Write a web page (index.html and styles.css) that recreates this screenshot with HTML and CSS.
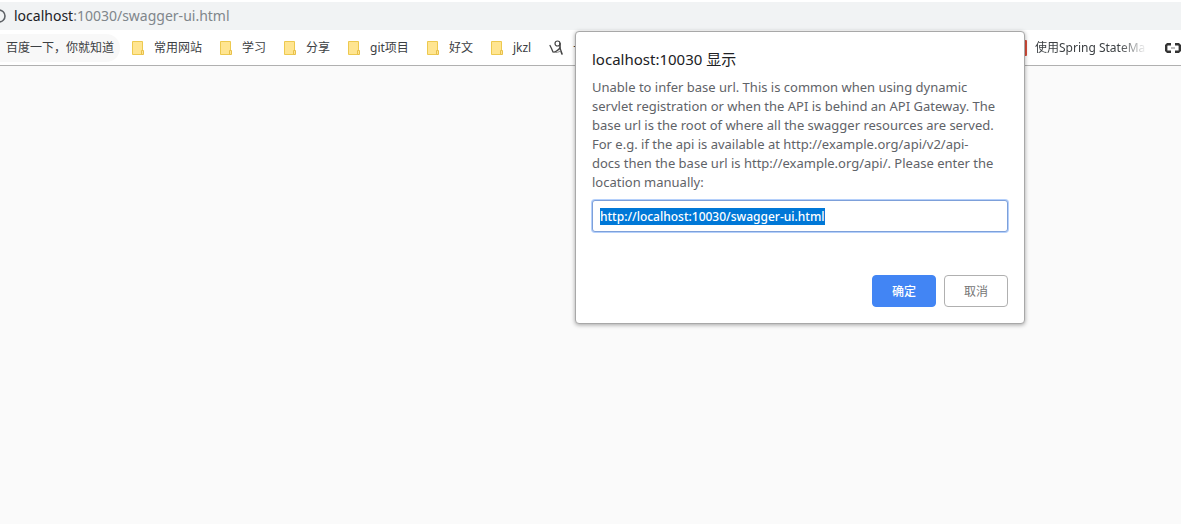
FILE: index.html
```html
<!DOCTYPE html>
<html lang="zh-CN">
<head>
<meta charset="utf-8">
<title>localhost:10030/swagger-ui.html</title>
<link rel="stylesheet" href="styles.css">
</head>
<body>
<svg class="defs" aria-hidden="true">
  <symbol id="folder" viewBox="0 0 12 14">
    <path d="M.5.5h10v13H.5z" fill="#ffe591" stroke="#edc94f"/>
    <path d="M9.500 9.500h2v4h-2z" fill="#ffe591" stroke="#e8c04a"/>
  </symbol>
</svg>
<header class="browser">
  <div class="address">
    <svg class="info" viewBox="0 0 14 14" aria-hidden="true"><circle cx="7" cy="7" r="6" fill="none" stroke="#5f6368" stroke-width="1.600"/></svg>
    <span class="url"><span class="host">localhost</span>:10030/swagger-ui.html</span>
  </div>
  <nav class="bookmarks" aria-label="书签">
    <a class="bookmark bookmark-active" href="#">百度一下，你就知道</a>
    <a class="bookmark" href="#"><svg class="folder"><use href="#folder"/></svg>常用网站</a>
    <a class="bookmark" href="#"><svg class="folder"><use href="#folder"/></svg>学习</a>
    <a class="bookmark" href="#"><svg class="folder"><use href="#folder"/></svg>分享</a>
    <a class="bookmark" href="#"><svg class="folder"><use href="#folder"/></svg>git项目</a>
    <a class="bookmark" href="#"><svg class="folder"><use href="#folder"/></svg>好文</a>
    <a class="bookmark" href="#"><svg class="folder"><use href="#folder"/></svg>jkzl</a>
    <a class="bookmark" href="#"><svg class="sketch" viewBox="0 0 14 16" aria-hidden="true"><g fill="none" stroke="#444" stroke-linecap="round"><path d="M1 5.500 2.500 8.500 4 12c2 .8 4-1 7-4" stroke-width="1.300"/><circle cx="8.500" cy="3.500" r="2.500" stroke-width="1.200"/><path d="M11 3.500v5l2 5.500" stroke-width="1.600"/><path d="M4.500 12.500c3 0 5 0 7-1.500" stroke="#888" stroke-width="1"/></g></svg>一</a>
    <a class="bookmark bookmark-end" href="#"><svg class="site" viewBox="0 0 16 16" aria-hidden="true"><rect width="16" height="16" rx="1" fill="#d84d3b"/><path d="M3 4h11M13 4v9" stroke="#b93829" stroke-width="1" fill="none"/></svg><span class="fade">使用Spring StateMa</span></a>
    <a class="bookmark" href="#" aria-label="链接"><svg class="link" viewBox="0 0 16 10" aria-hidden="true"><path d="M6 1.200H2.500L1.200 2.500v5L2.500 8.800H6M10 1.200h3.500l1.300 1.300v5l-1.300 1.300H10" fill="none" stroke="#333" stroke-width="2.400"/><path d="M6 5h4" stroke="#aaa" stroke-width="1.500"/></svg></a>
  </nav>
</header>
<main class="page"></main>
<form class="dialog" role="dialog" aria-labelledby="dialog-title">
  <h1 class="title" id="dialog-title">localhost:10030 显示</h1>
  <label class="message" for="base-url">Unable to infer base url. This is common when using dynamic servlet registration or when the API is behind an API Gateway. The base url is the root of where all the swagger resources are served. For e.g. if the api is available at http://example.org/api/v2/api-<br>docs then the base url is http://example.org/api/. Please enter the location manually:</label>
  <input class="field" id="base-url" type="text" value="http://localhost:10030/swagger-ui.html" spellcheck="false" autocomplete="off" autofocus>
  <div class="actions">
    <button class="button primary" type="submit">确定</button>
    <button class="button" type="button">取消</button>
  </div>
</form>
<script src="script.js"></script>
</body>
</html>
```
FILE: styles.css
```css
* { box-sizing: border-box; }
body {
  margin: 0;
  min-height: 100vh;
  display: flex;
  flex-direction: column;
  background: #fafafa;
  font-family: "Noto Sans", "Noto Sans CJK SC", sans-serif;
  font-size: 12px;
  overflow: hidden;
}
.defs { position: absolute; width: 0; height: 0; }
.browser {
  background: #fff;
  border-bottom: 1px solid #b0b0b0;
  padding-top: 2px;
}
.address {
  display: flex;
  align-items: center;
  gap: 8px;
  height: 28px;
  background: #f1f3f4;
}
.info { width: 14px; height: 14px; margin-left: -8px; flex: none; }
.url { font-size: 14px; line-height: 20px; color: #80868b; }
.host { color: #202124; }
.bookmarks {
  display: flex;
  align-items: center;
  gap: 18px;
  height: 35px;
  padding-top: 1px;
  overflow: hidden;
}
.bookmark {
  display: flex;
  align-items: center;
  gap: 10px;
  flex: none;
  color: #3c4043;
  line-height: 28px;
  text-decoration: none;
  white-space: nowrap;
}
.bookmark-active {
  margin-right: -6px;
  padding: 0 6px;
  border-radius: 0 14px 14px 0;
  background: #f8f8f8;
}
.bookmark-end { margin-left: auto; gap: 8px; }
.folder { width: 12px; height: 14px; }
.sketch { width: 14px; height: 16px; }
.site { width: 16px; height: 16px; }
.link { width: 16px; height: 10px; }
.fade {
  width: 112px;
  overflow: hidden;
  -webkit-mask-image: linear-gradient(to right, #000 75%, transparent);
  mask-image: linear-gradient(to right, #000 75%, transparent);
}
.page { flex: 1; }
.dialog {
  position: absolute;
  top: 31px;
  right: 156px;
  width: 450px;
  padding: 16px;
  border: 1px solid #a8a8a8;
  border-radius: 4px;
  background: #fff;
  box-shadow: 0 1px 4px rgba(0, 0, 0, .35);
}
.title {
  margin: 0 0 8px;
  color: #202124;
  font-size: 15px;
  font-weight: 400;
  line-height: 22px;
}
.message {
  display: block;
  color: #5f6368;
  font-size: 13px;
  line-height: 19px;
}
.field {
  display: block;
  width: 100%;
  height: 32px;
  margin-top: 8px;
  padding: 0 7px;
  border: 1px solid #7da0da;
  border-radius: 3px;
  outline: none;
  background: #fff;
  box-shadow: 0 0 0 1px #b5d0fb;
  color: #202124;
  font-family: inherit;
  font-size: 12px;
  font-weight: 500;
}
.field::selection { background: #0078d7; color: #fff; }
.actions {
  display: flex;
  justify-content: flex-end;
  gap: 8px;
  margin-top: 43px;
}
.button {
  width: 64px;
  height: 32px;
  padding: 0;
  border: 1px solid #b0b0b0;
  border-radius: 4px;
  background: #fff;
  color: #757575;
  font-family: inherit;
  font-size: 12px;
}
.primary { border-color: #4285f4; background: #4285f4; color: #fff; font-weight: 500; }
```
FILE: script.js
```js
const field = document.getElementById("base-url");
field.focus();
field.select();
```
